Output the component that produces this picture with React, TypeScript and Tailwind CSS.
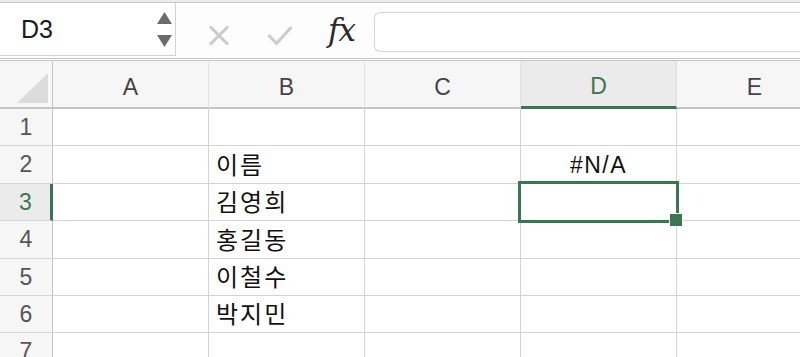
import React from "react";

const cols = ["A", "B", "C", "D", "E"];
const rows: { n: number; b?: string; d?: string }[] = [
  { n: 1 },
  { n: 2, b: "이름", d: "#N/A" },
  { n: 3, b: "김영희" },
  { n: 4, b: "홍길동" },
  { n: 5, b: "이철수" },
  { n: 6, b: "박지민" },
  { n: 7 },
];

export default function App() {
  return (
    <div className="w-[800px] h-[357px] overflow-hidden bg-white relative font-['Liberation_Sans','Noto_Sans_CJK_KR',sans-serif]">
      {/* top band */}
      <div className="h-[3px] bg-[#ececec] border-b border-[#c9c9c9]" />
      {/* formula bar */}
      <div className="flex h-[58px] border-b-[3px] border-double border-[#c6c6c6] bg-[#fdfdfd]">
        <div className="w-[176px] h-[53px] bg-white border-r border-b border-[#d2d2d2] flex items-center relative">
          <span className="ml-[21px] text-[25px] text-[#1a1a1a] leading-none">D3</span>
          <div className="ml-auto mr-[3px] flex flex-col gap-[11px]">
            <svg width="15" height="12" viewBox="0 0 15 12">
              <polygon points="7.5,0 15,12 0,12" fill="#6b6b6b" />
            </svg>
            <svg width="15" height="12" viewBox="0 0 15 12">
              <polygon points="0,0 15,0 7.5,12" fill="#6b6b6b" />
            </svg>
          </div>
        </div>
        <div className="ml-[32px] mt-[22px] h-[22px]">
          <svg width="22" height="21" viewBox="0 0 22 21">
            <path d="M2 1.5 L20 19.5 M20 1.5 L2 19.5" stroke="#cbcbcb" strokeWidth="3" />
          </svg>
        </div>
        <div className="ml-[37px] mt-[22px] h-[22px]">
          <svg width="26" height="21" viewBox="0 0 26 21">
            <path d="M1.5 10 L9.5 18.5 L24.5 2" stroke="#cbcbcb" strokeWidth="3" fill="none" />
          </svg>
        </div>
        <div className="ml-[35px] mt-[12px] text-[31px] italic leading-none font-['DejaVu_Serif',serif] text-[#2a2a2a] tracking-[-1px]">
          fx
        </div>
        <div className="ml-[19px] mt-[9px] h-[40px] flex-1 bg-white border border-r-0 border-[#d6d6d6] rounded-l-[6px]" />
      </div>

      {/* column header */}
      <div className="flex h-[48px]">
        <div className="w-[53px] shrink-0 h-[48px] bg-[#f6f6f6] border-r border-b-2 border-[#c4c4c4] flex items-end justify-end pr-[4px] pb-[4px]">
          <svg width="31" height="30" viewBox="0 0 31 30">
            <polygon points="0,30 31,0 31,30" fill="#dcdcdc" />
          </svg>
        </div>
        {cols.map((c) => {
          const sel = c === "D";
          return (
            <div
              key={c}
              className={
                sel
                  ? "w-[156px] shrink-0 h-[48px] bg-[#ebebeb] border-r border-r-[#dedede] border-b-[3px] border-b-[#3b7650] flex items-center justify-center pt-[6px] text-[23px] text-[#3b7650]"
                  : "w-[156px] shrink-0 h-[48px] bg-[#f6f6f6] border-r border-r-[#e2e2e2] border-b-2 border-b-[#c4c4c4] flex items-center justify-center pt-[6px] text-[23px] text-[#444]"
              }
            >
              {c}
            </div>
          );
        })}
      </div>

      {/* rows */}
      {rows.map((r) => {
        const sel = r.n === 3;
        return (
          <div key={r.n} className="flex h-[37.4px]">
            <div
              className={
                sel
                  ? "w-[53px] shrink-0 bg-[#ebebeb] border-r-[3px] border-r-[#3b7650] border-b border-b-[#d6d6d6] flex items-center justify-center pl-[1px] text-[23px] text-[#3b7650]"
                  : "w-[53px] shrink-0 bg-[#f6f6f6] border-r border-r-[#c4c4c4] border-b border-b-[#d6d6d6] flex items-center justify-center text-[23px] text-[#555]"
              }
            >
              {r.n}
            </div>
            {cols.map((c) => (
              <div
                key={c}
                className={
                  c === "D"
                    ? "w-[156px] shrink-0 border-r border-b border-[#d3d3d3] flex items-end justify-center pb-[6px] text-[23px] tracking-[1.5px] leading-[24px] text-[#111]"
                    : "w-[156px] shrink-0 border-r border-b border-[#d3d3d3] flex items-end pl-[7px] pb-[5px] text-[24px] tracking-[2px] leading-[24px] text-[#111]"
                }
              >
                {c === "B" ? r.b : c === "D" ? r.d : null}
              </div>
            ))}
          </div>
        );
      })}

      {/* selection overlay */}
      <div className="absolute left-[518px] top-[181px] w-[161px] h-[42px] border-[3px] border-[#3b7650]" />
      <div className="absolute left-[669px] top-[213px] w-[14px] h-[14px] bg-[#3b7650] border-[1.5px] border-white" />
    </div>
  );
}
